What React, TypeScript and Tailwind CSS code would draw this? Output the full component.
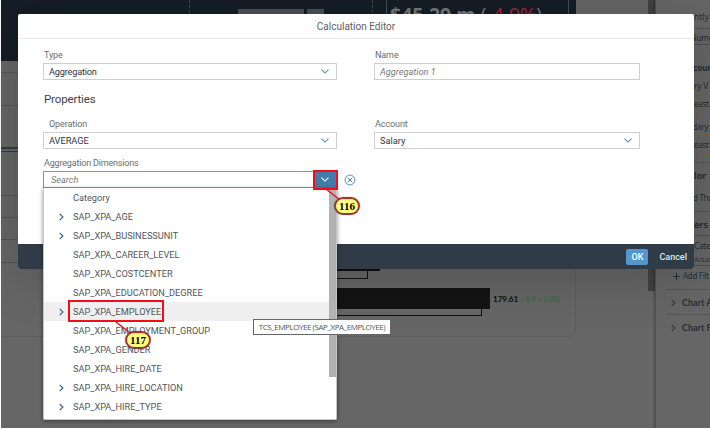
import React from "react";

const dimensions: { name: string; expandable?: boolean; active?: boolean }[] = [
  { name: "Category" },
  { name: "SAP_XPA_AGE", expandable: true },
  { name: "SAP_XPA_BUSINESSUNIT", expandable: true },
  { name: "SAP_XPA_CAREER_LEVEL" },
  { name: "SAP_XPA_COSTCENTER" },
  { name: "SAP_XPA_EDUCATION_DEGREE" },
  { name: "SAP_XPA_EMPLOYEE", expandable: true, active: true },
  { name: "SAP_XPA_EMPLOYMENT_GROUP" },
  { name: "SAP_XPA_GENDER" },
  { name: "SAP_XPA_HIRE_DATE" },
  { name: "SAP_XPA_HIRE_LOCATION", expandable: true },
  { name: "SAP_XPA_HIRE_TYPE", expandable: true },
];

function ChevronDown({ className }: { className: string }) {
  return (
    <svg className={className} width="8" height="5" viewBox="0 0 8 5" fill="none" stroke="currentColor" strokeWidth="1.1">
      <path d="M0.5 0.7 L4 4.1 L7.5 0.7" />
    </svg>
  );
}

function ChevronRight({ className }: { className: string }) {
  return (
    <svg className={className} width="5" height="8" viewBox="0 0 5 8" fill="none" stroke="currentColor" strokeWidth="1.2">
      <path d="M0.7 0.9 L3.9 4 L0.7 7.1" />
    </svg>
  );
}

function Field({ label, value, className, valueClass, select, inset }: {
  label: string; value: string; className: string; valueClass: string; select?: boolean; inset?: boolean;
}) {
  return (
    <div className={className}>
      <div className={`h-[17px] text-[9px] leading-[18px] tracking-[-0.1px] text-[#6a6d70] ${inset ? "pl-[6px]" : "pl-px"}`}>{label}</div>
      <div className="flex h-[17px] items-center justify-between border border-[#cfcfcf] pr-[7px] pl-[5px]">
        <span className={`pt-px text-[9.2px] ${valueClass}`}>{value}</span>
        {select && <ChevronDown className="text-[#5b8db8]" />}
      </div>
    </div>
  );
}

function DashboardHeader() {
  return (
    <div className="flex h-[61px] w-[575px] bg-[#151d26]">
      <div className="h-full w-[188px]" />
      <div className="flex h-full w-[184px] border-x border-dashed border-[#3b4c5c] pt-[9px] pl-[48px]">
        <div className="h-[5px] w-[66px] bg-[#4c5056]" />
        <div className="ml-[3px] h-[5px] w-[17px] bg-[#4c5056]" />
      </div>
      <div className="ml-[13px] h-full w-[183px] border-x border-[#474e56] pl-[3px] text-[19.5px] leading-[30px] font-bold whitespace-nowrap text-[#74787c]">
        <span>$45.29 m</span>{" "}
        <span className="font-normal">(</span>
        <span className="font-normal text-[#a0243c]">-4.9%</span>
        <span className="font-normal">)</span>
      </div>
    </div>
  );
}

function ChartArea() {
  return (
    <div className="h-[276px] w-[575px] rounded-br-[7px] border-r border-b border-[#5b5d5f]">
      <div className="h-[12px] border-b border-[#565656]" />
      <div className="h-[33px] border-b border-[#565656]" />
      <div className="h-[46px] border-b border-[#353b41] pt-[41px]">
        <div className="h-[2px] bg-[#353b41]" />
      </div>
      <div className="h-[44px] border-b border-[#505356]" />
      <div className="h-[22px] border-b border-[#505356]" />
      <div className="h-[22px] border-b border-[#505356]" />
      <div className="h-[29px]">
        <div className="h-[23px] w-[40px] border-b border-[#505356]" />
      </div>
      <div className="ml-[336px] w-[43px] border-t-2 border-[#111]">
        <div className="h-[8px] w-[31px] border-r border-b border-[#111]" />
      </div>
      <div className="mt-[9px] ml-[336px] flex h-[21px] items-center">
        <div className="h-[21px] w-[153px] bg-[#141414]" />
        <div className="ml-[3px] pt-px font-['Lato',sans-serif] text-[8px] leading-[9px] whitespace-nowrap text-[#35693a]">
          <b className="text-[#0c0c0c]">179.61</b> +4.9 +3.0%
        </div>
      </div>
      <div className="ml-[336px] h-[7px] w-[145px] border-r border-b border-[#111]" />
    </div>
  );
}

function BuilderPanel() {
  return (
    <div className="h-[429px] w-[55px] overflow-hidden border-l border-[#525252] bg-[#666] text-[8.5px] whitespace-nowrap text-[#2b2e31] shadow-[-1px_0_2px_rgba(0,0,0,0.25)]">
      <div className="mt-[8px] h-[17px] pl-[38px] leading-[17px]">ntly</div>
      <div className="mt-[3px] h-[17px] border-y border-[#505050] pl-[34px] tracking-[-0.3px] leading-[17px]">Nume</div>
      <div className="mt-[13px] h-[19px] pl-[37px] leading-[20px] font-bold tracking-[-0.3px]">cour</div>
      <div className="h-[17px] border-b border-dashed border-[#7d643b] pl-[38px] leading-[17px] tracking-[-0.3px]">ry V</div>
      <div className="h-[20px] border-b border-dashed border-[#7d643b] pl-[38px] text-[8px] leading-[19px] tracking-[-0.3px]">east</div>
      <div className="h-[21px] border-b border-dashed border-[#7d643b] pl-[36px] leading-[25px] tracking-[-0.4px]">dary</div>
      <div className="h-[20px] border-b border-dashed border-[#7d643b] pl-[38px] text-[8px] leading-[19px] tracking-[-0.3px]">east</div>
      <div className="ml-[10px] h-[8px] border-b border-[#565656]" />
      <div className="h-[24px] pl-[38px] text-[9px] leading-[26px] font-bold">lor</div>
      <div className="ml-[10px] h-[25px] border-b border-[#565656] pl-[27px] text-[8px] leading-[21px] text-[#25303b] tracking-[-0.3px]">d Thr</div>
      <div className="h-[24px] border-b border-[#505050] pl-[38px] text-[9px] leading-[25px] font-bold">ers</div>
      <div className="h-[30px] border-b border-[#505050] pl-[38px] text-[#25303b]">
        <div className="h-[17px] leading-[20px] tracking-[-0.4px]">Cate</div>
        <div className="text-[7px] leading-[13px] tracking-[-0.6px] text-[#393939]">Actua</div>
      </div>
      <div className="ml-[10px] flex h-[24px] items-center gap-[3px] border-b border-[#565656] pb-[3px] pl-[7px] text-[8px] tracking-[-0.3px] text-[#25303b]">
        <svg className="shrink-0" width="7" height="7" viewBox="0 0 7 7" stroke="currentColor"><path d="M3.5 0V7M0 3.5H7" /></svg>
        Add Filt
      </div>
      <div className="ml-[10px] flex h-[25px] items-center gap-[6px] border-b border-[#565656] pt-px pl-[5px] font-['Lato',sans-serif] text-[9px] font-bold">
        <ChevronRight className="shrink-0 text-[#393939]" />Chart A
      </div>
      <div className="ml-[10px] flex h-[25px] items-center gap-[6px] pt-px pl-[5px] font-['Lato',sans-serif] text-[9px] font-bold">
        <ChevronRight className="shrink-0 text-[#393939]" />Chart P
      </div>
    </div>
  );
}

function DimensionList() {
  return (
    <div className="absolute top-[188px] left-[43px] flex h-[232px] w-[294px] justify-between rounded-b-[2px] border border-t-0 border-[#c6c6c6] bg-white shadow-[0_1px_4px_rgba(0,0,0,0.45)]">
      <div className="w-[286px]">
        {dimensions.map((d) => (
          <div key={d.name} className={`flex h-[19px] items-center ${d.active ? "bg-[#efefef]" : ""}`}>
            <div className="flex w-[29px] justify-end pr-[9px]">
              {d.expandable && <ChevronRight className="text-[#346187]" />}
            </div>
            <span className="text-[9.2px] whitespace-nowrap text-[#515559]">{d.name}</span>
          </div>
        ))}
      </div>
      <div className="h-[189px] w-[7px] bg-[#b2b2b2]" />
    </div>
  );
}

function Dialog() {
  return (
    <div className="absolute top-[14px] left-[18px] flex h-[255px] w-[676px] flex-col overflow-hidden rounded-[2px] bg-white">
      <div className="h-[25px] border-b border-[#ececec] text-center text-[10px] leading-[26px] text-[#5c6063]">Calculation Editor</div>
      <div className="flex-1 px-[25px] pt-[7px]">
        <div className="flex">
          <Field className="w-[294px]" label="Type" value="Aggregation" valueClass="tracking-[-0.2px] text-[#32363a]" select />
          <Field className="ml-[37px] w-[266px]" label="Name" value="Aggregation 1" valueClass="text-[#74777a] italic" />
        </div>
        <div className="h-[35px] pt-[9px] pl-px text-[11.5px] leading-[21px] tracking-[-0.15px] text-[#3f4346]">Properties</div>
        <div className="flex">
          <Field className="w-[294px]" label="Operation" value="AVERAGE" valueClass="text-[#32363a]" select inset />
          <Field className="ml-[37px] w-[266px]" label="Account" value="Salary" valueClass="text-[#32363a]" select />
        </div>
        <div className="mt-[5px] h-[17px] pl-px text-[9px] leading-[19px] tracking-[-0.18px] text-[#6a6d70]">Aggregation Dimensions</div>
        <div className="flex h-[17px] items-center">
          <div className="flex h-[17px] w-[294px] items-center justify-between border border-[#6d9cc3]">
            <span className="pt-px pl-[7px] text-[9.2px] text-[#74777a] italic">Search</span>
            <div className="flex h-[16px] w-[22px] items-center justify-center bg-[#427cac] text-white"><ChevronDown className="" /></div>
          </div>
          <svg className="ml-[7px]" width="12" height="12" viewBox="0 0 12 12" fill="none" stroke="#4b80ac">
            <circle cx="6" cy="6" r="4.9" strokeWidth="0.9" /><path d="M3.8 3.8L8.2 8.2M8.2 3.8L3.8 8.2" />
          </svg>
        </div>
      </div>
      <div className="flex h-[25px] items-center justify-end bg-[#2f3c48] pt-px pr-[7px] text-[9px] font-medium text-[#d9e9f7]">
        <button className="h-[16px] w-[22px] rounded-[2px] bg-[#5496cd] leading-[17px] text-white">OK</button>
        <button className="ml-[11px] pt-px">Cancel</button>
      </div>
    </div>
  );
}

function Marker({ n, className }: { n: string; className: string }) {
  return (
    <div className={`absolute flex h-[16px] w-[24px] items-center justify-center rounded-full border border-[#ca2020] bg-[#ffff80] font-['Liberation_Serif',serif] text-[11px] font-bold text-black shadow-[0_0_1px_1px_#6b3434] ${className}`}>{n}</div>
  );
}

export default function App() {
  return (
    <div className="relative h-[429px] w-[710px] overflow-hidden bg-white font-['Roboto',sans-serif]">
      <div className="ml-px flex h-[428px] overflow-hidden bg-[#666] font-['Noto_Sans',sans-serif]">
        <div className="w-[575px]">
          <DashboardHeader />
          <ChartArea />
        </div>
        <div className="w-[72px]" />
        <div className="h-[291px] w-[7px] bg-[#424242]" />
        <BuilderPanel />
      </div>
      <div className="absolute top-[14px] left-[18px] h-[255px] w-[676px] shadow-[0_8px_50px_rgba(0,0,0,0.2)]" />
      <Dialog />
      <DimensionList />
      <div className="absolute top-[319px] left-[253px] flex h-[16px] w-[138px] items-center justify-center border border-[#666] bg-white font-['Open_Sans',sans-serif] text-[8px] tracking-[-0.45px] whitespace-nowrap text-[#555]">TCS_EMPLOYEE (SAP_XPA_EMPLOYEE)</div>
      <div className="absolute top-[169.5px] left-[313px] h-[20px] w-[25px] border-2 border-[#f20d17]" />
      <div className="absolute top-[300px] left-[68px] h-[22px] w-[96px] border-2 border-[#f20d17]" />
      <svg className="absolute top-0 left-0" width="710" height="429" viewBox="0 0 710 429" stroke="#f20d17" strokeWidth="1.5">
        <path d="M326 189L340 200M116 322L130 333" />
      </svg>
      <Marker n="116" className="top-[198px] left-[335px]" />
      <Marker n="117" className="top-[332px] left-[126px]" />
    </div>
  );
}
